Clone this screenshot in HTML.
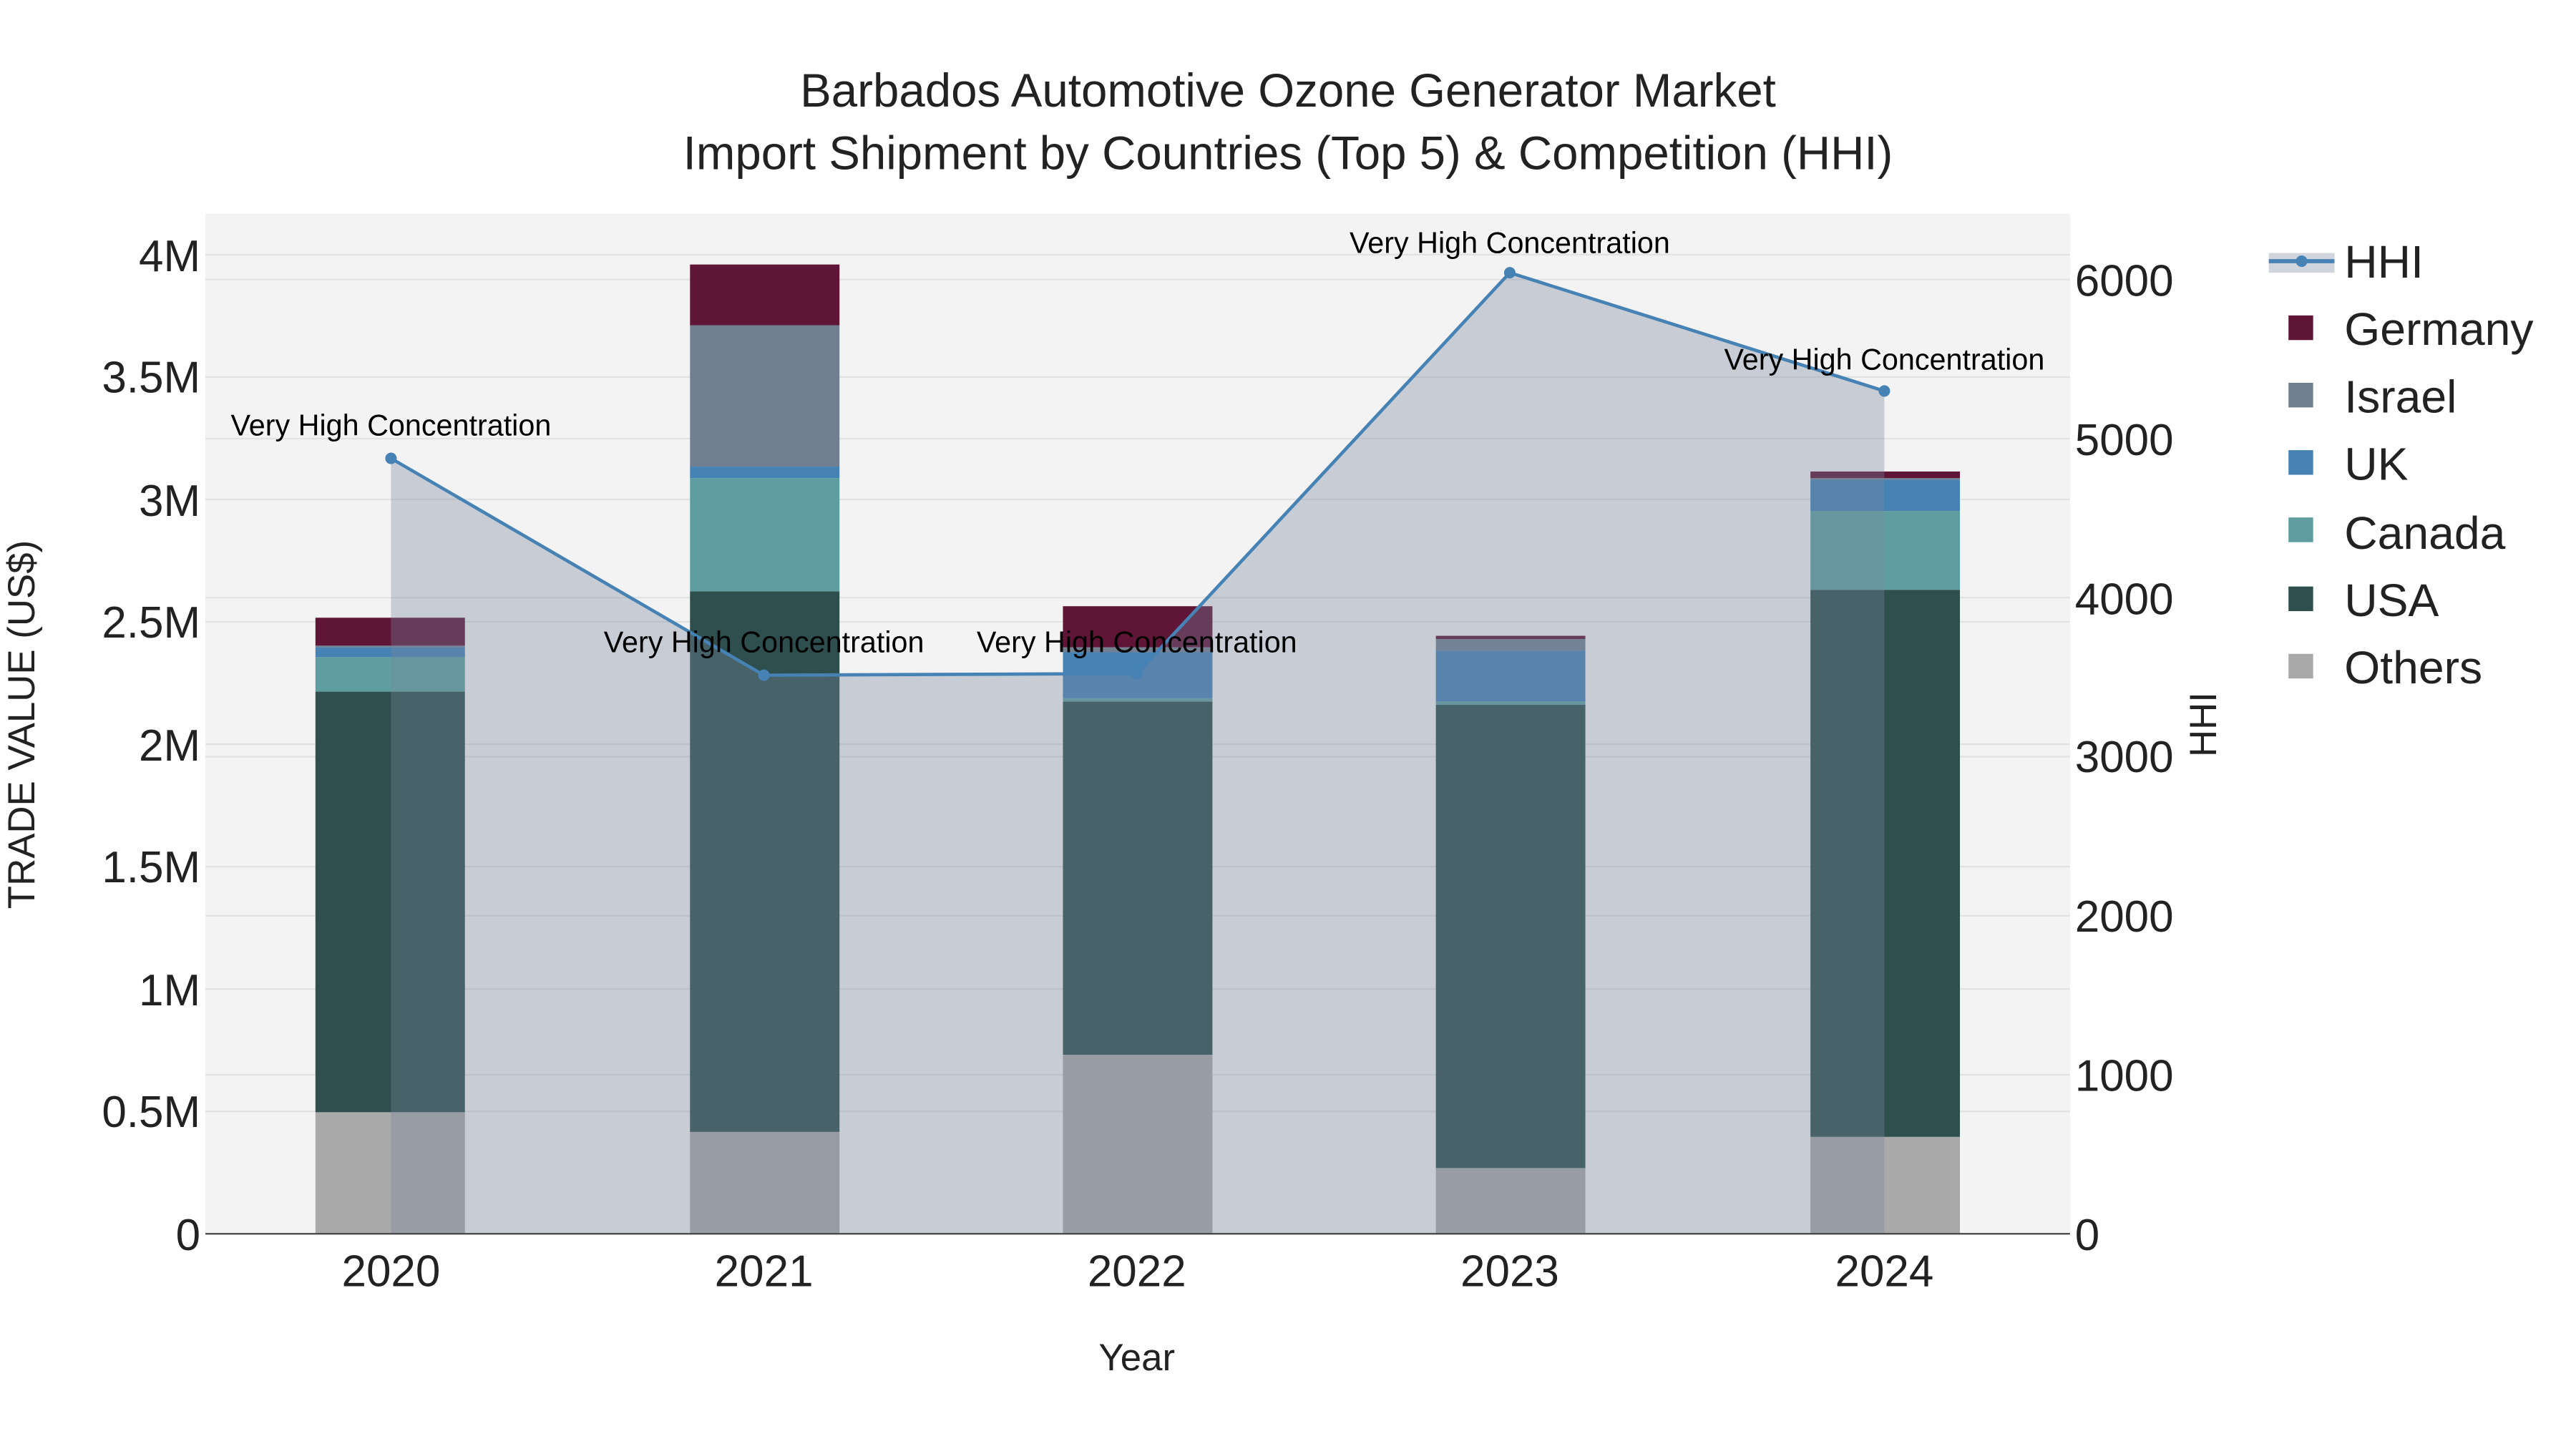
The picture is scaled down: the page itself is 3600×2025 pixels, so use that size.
<!DOCTYPE html>
<html><head><meta charset="utf-8"><style>
html,body{margin:0;padding:0;background:#fff;width:3600px;height:2025px;overflow:hidden}
svg{display:block}
text{font-family:"Liberation Sans",Arial,sans-serif}
</style></head><body>
<svg width="3600" height="2025" viewBox="0 0 1568 882" xmlns="http://www.w3.org/2000/svg">
<rect x="0" y="0" width="1568" height="882" fill="#fff"/>
<rect x="125" y="130" width="1135" height="621" fill="#f3f3f3"/>
<g stroke="#e2e2e2" stroke-width="1">
<line x1="125" x2="1260" y1="676.5" y2="676.5"/><line x1="125" x2="1260" y1="602" y2="602"/>
<line x1="125" x2="1260" y1="527.5" y2="527.5"/><line x1="125" x2="1260" y1="453" y2="453"/>
<line x1="125" x2="1260" y1="378.5" y2="378.5"/><line x1="125" x2="1260" y1="304" y2="304"/>
<line x1="125" x2="1260" y1="229.5" y2="229.5"/><line x1="125" x2="1260" y1="155" y2="155"/>
<line x1="125" x2="1260" y1="654.2" y2="654.2"/><line x1="125" x2="1260" y1="557.4" y2="557.4"/>
<line x1="125" x2="1260" y1="460.6" y2="460.6"/><line x1="125" x2="1260" y1="363.8" y2="363.8"/>
<line x1="125" x2="1260" y1="267" y2="267"/><line x1="125" x2="1260" y1="170.2" y2="170.2"/>
</g>
<g>
<rect x="192" y="677" width="91" height="74" fill="#a9a9a9"/>
<rect x="192" y="421" width="91" height="256" fill="#2f4f4f"/>
<rect x="192" y="400" width="91" height="21" fill="#5f9ea0"/>
<rect x="192" y="394" width="91" height="6" fill="#4682b4"/>
<rect x="192" y="393" width="91" height="1" fill="#708090"/>
<rect x="192" y="376" width="91" height="17" fill="#5f1536"/>
<rect x="420" y="689" width="91" height="62" fill="#a9a9a9"/>
<rect x="420" y="360" width="91" height="329" fill="#2f4f4f"/>
<rect x="420" y="291" width="91" height="69" fill="#5f9ea0"/>
<rect x="420" y="284" width="91" height="7" fill="#4682b4"/>
<rect x="420" y="198" width="91" height="86" fill="#708090"/>
<rect x="420" y="161" width="91" height="37" fill="#5f1536"/>
<rect x="647" y="642" width="91" height="109" fill="#a9a9a9"/>
<rect x="647" y="427" width="91" height="215" fill="#2f4f4f"/>
<rect x="647" y="425" width="91" height="2" fill="#5f9ea0"/>
<rect x="647" y="397" width="91" height="28" fill="#4682b4"/>
<rect x="647" y="394" width="91" height="3" fill="#708090"/>
<rect x="647" y="369" width="91" height="25" fill="#5f1536"/>
<rect x="874" y="711" width="91" height="40" fill="#a9a9a9"/>
<rect x="874" y="429" width="91" height="282" fill="#2f4f4f"/>
<rect x="874" y="427" width="91" height="2" fill="#5f9ea0"/>
<rect x="874" y="396" width="91" height="31" fill="#4682b4"/>
<rect x="874" y="389" width="91" height="7" fill="#708090"/>
<rect x="874" y="387" width="91" height="2" fill="#5f1536"/>
<rect x="1102" y="692" width="91" height="59" fill="#a9a9a9"/>
<rect x="1102" y="359" width="91" height="333" fill="#2f4f4f"/>
<rect x="1102" y="311" width="91" height="48" fill="#5f9ea0"/>
<rect x="1102" y="292" width="91" height="19" fill="#4682b4"/>
<rect x="1102" y="291" width="91" height="1" fill="#708090"/>
<rect x="1102" y="287" width="91" height="4" fill="#5f1536"/>
</g>
<polygon points="238,279 465,411 692,410 919,166 1147,238 1147,751 238,751" fill="rgb(121,135,158)" fill-opacity="0.35"/>
<polyline points="238,279 465,411 692,410 919,166 1147,238" fill="none" stroke="#4682b4" stroke-width="2"/>
<g fill="#4682b4"><circle cx="238" cy="279" r="3.5"/><circle cx="465" cy="411" r="3.5"/><circle cx="692" cy="410" r="3.5"/><circle cx="919" cy="166" r="3.5"/><circle cx="1147" cy="238" r="3.5"/></g>
<line x1="125" x2="1260" y1="751" y2="751" stroke="#444" stroke-width="1"/>
<g font-size="18" fill="#000" text-anchor="middle">
<text x="238" y="265">Very High Concentration</text>
<text x="465" y="397">Very High Concentration</text>
<text x="692" y="397">Very High Concentration</text>
<text x="919" y="154">Very High Concentration</text>
<text x="1147" y="225">Very High Concentration</text>
</g>
<g font-size="27" fill="#222" text-anchor="end">
<text x="122" y="761">0</text><text x="122" y="686">0.5M</text><text x="122" y="612">1M</text>
<text x="122" y="537">1.5M</text><text x="122" y="463">2M</text><text x="122" y="388">2.5M</text>
<text x="122" y="314">3M</text><text x="122" y="239">3.5M</text><text x="122" y="165">4M</text>
</g>
<g font-size="27" fill="#222" text-anchor="start">
<text x="1263" y="761">0</text><text x="1263" y="664">1000</text><text x="1263" y="567">2000</text>
<text x="1263" y="470">3000</text><text x="1263" y="374">4000</text><text x="1263" y="277">5000</text>
<text x="1263" y="180">6000</text>
</g>
<g font-size="27" fill="#222" text-anchor="middle">
<text x="238" y="783">2020</text><text x="465" y="783">2021</text><text x="692" y="783">2022</text>
<text x="919" y="783">2023</text><text x="1147" y="783">2024</text>
</g>
<text x="692" y="834" font-size="23" fill="#222" text-anchor="middle">Year</text>
<text transform="translate(21,441) rotate(-90)" font-size="23" fill="#222" text-anchor="middle">TRADE VALUE (US$)</text>
<text transform="translate(1349,441) rotate(-90)" font-size="23" fill="#222" text-anchor="middle">HHI</text>
<g font-size="28.5" fill="#222" text-anchor="middle">
<text x="784" y="65">Barbados Automotive Ozone Generator Market</text>
<text x="784" y="103">Import Shipment by Countries (Top 5) &amp; Competition (HHI)</text>
</g>
<rect x="1381" y="154" width="40" height="12" fill="rgb(121,135,158)" fill-opacity="0.35"/>
<line x1="1381" x2="1421" y1="159" y2="159" stroke="#4682b4" stroke-width="2.5"/>
<circle cx="1401" cy="159" r="3.5" fill="#4682b4"/>
<rect x="1393" y="192" width="15" height="15" fill="#5f1536"/>
<rect x="1393" y="233" width="15" height="15" fill="#708090"/>
<rect x="1393" y="274" width="15" height="15" fill="#4682b4"/>
<rect x="1393" y="315" width="15" height="15" fill="#5f9ea0"/>
<rect x="1393" y="357" width="15" height="15" fill="#2f4f4f"/>
<rect x="1393" y="398" width="15" height="15" fill="#a9a9a9"/>
<g font-size="28" fill="#222">
<text x="1427" y="169">HHI</text><text x="1427" y="210">Germany</text><text x="1427" y="251">Israel</text>
<text x="1427" y="292">UK</text><text x="1427" y="334">Canada</text><text x="1427" y="375">USA</text>
<text x="1427" y="416">Others</text>
</g>
</svg>
</body></html>
